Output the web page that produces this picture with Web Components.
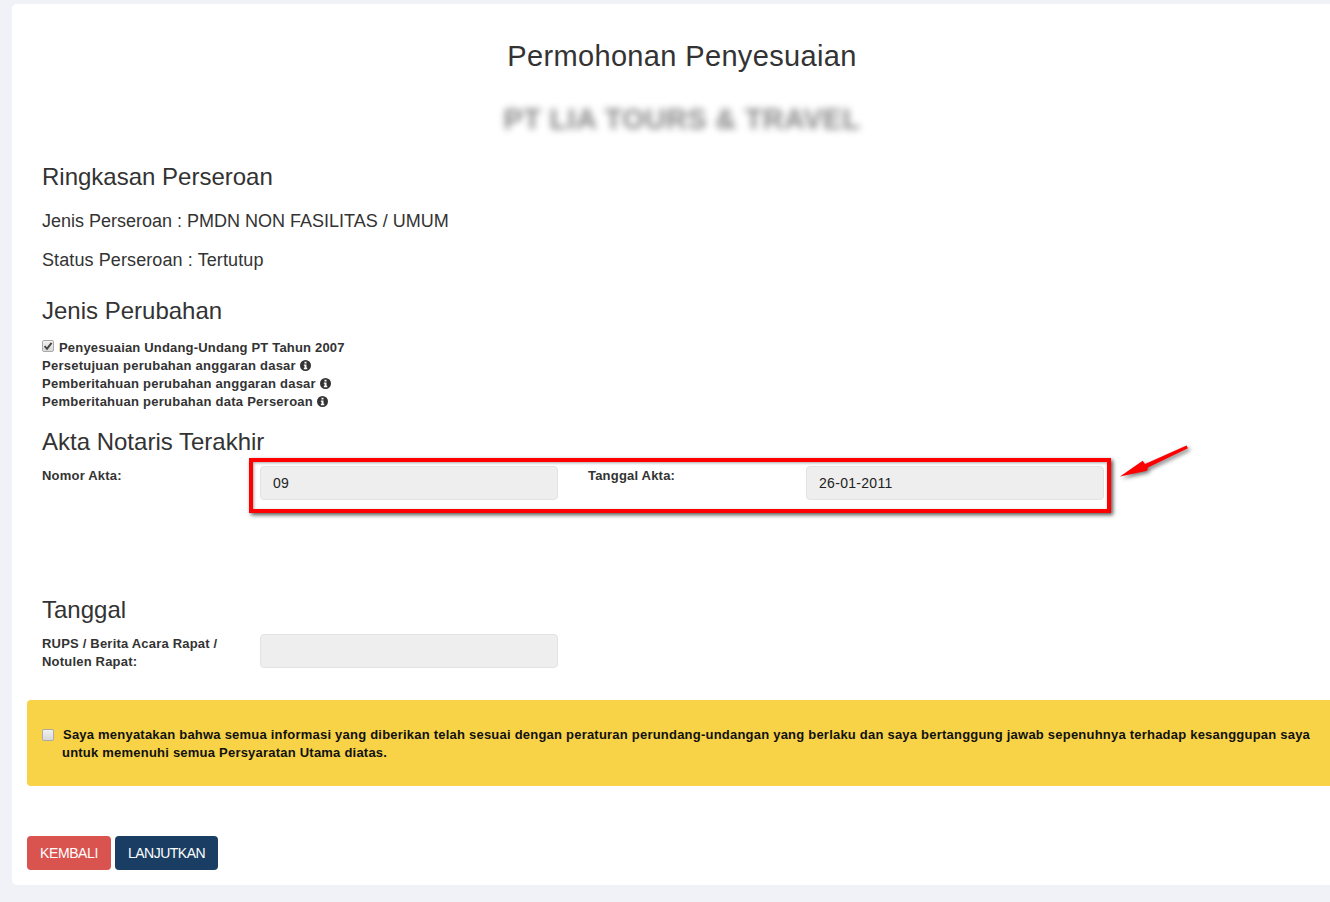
<!DOCTYPE html>
<html>
<head>
<meta charset="utf-8">
<title>Permohonan Penyesuaian</title>
<style>
  html, body { margin: 0; overflow: hidden; }
  body { background: #f0f2f7; color: #333; font-family: "Liberation Sans", Arial, sans-serif; height: 902px; }
</style>
</head>
<body>
<app-card>
  <page-title sub="PT LIA TOURS &amp; TRAVEL">Permohonan Penyesuaian</page-title>

  <section-head style="margin-top: 29px">Ringkasan Perseroan</section-head>
  <info-line style="margin-top: 21px">Jenis Perseroan : PMDN NON FASILITAS / UMUM</info-line>
  <info-line style="margin-top: 19px; letter-spacing: .1px">Status Perseroan : Tertutup</info-line>

  <section-head style="margin-top: 28px">Jenis Perubahan</section-head>
  <check-list style="margin-top: 15px">
    <check-item checked>Penyesuaian Undang-Undang PT Tahun 2007</check-item>
    <check-item info>Persetujuan perubahan anggaran dasar</check-item>
    <check-item info>Pemberitahuan perubahan anggaran dasar</check-item>
    <check-item info>Pemberitahuan perubahan data Perseroan</check-item>
  </check-list>

  <section-head style="margin-top: 18px">Akta Notaris Terakhir</section-head>
  <form-row style="margin-top: 11px">
    <form-field label="Nomor Akta:" value="09"></form-field>
    <form-field label="Tanggal Akta:" value="26-01-2011"></form-field>
  </form-row>

  <section-head style="margin-top: 97px">Tanggal</section-head>
  <form-row style="margin-top: 11px">
    <form-field label="RUPS / Berita Acara Rapat / Notulen Rapat:" value=""></form-field>
  </form-row>

  <notice-box style="margin-top: 29px">Saya menyatakan bahwa semua informasi yang diberikan telah sesuai dengan peraturan perundang-undangan yang berlaku dan saya bertanggung jawab sepenuhnya terhadap kesanggupan saya untuk memenuhi semua Persyaratan Utama diatas.</notice-box>

  <action-bar style="margin-top: 50px">
    <action-btn kind="danger">KEMBALI</action-btn>
    <action-btn kind="primary">LANJUTKAN</action-btn>
  </action-bar>

  <red-callout></red-callout>
</app-card>

<script>
class AppCard extends HTMLElement {
  constructor() {
    super();
    this.attachShadow({ mode: "open" }).innerHTML = `
      <style>
        :host { display: block; position: relative; box-sizing: border-box; width: 1340px; height: 881px; margin: 4px 0 0 12px; padding: 36px 15px 0; background: #fff; border-radius: 5px; }
      </style>
      <slot></slot>`;
  }
}

class PageTitle extends HTMLElement {
  constructor() {
    super();
    this.attachShadow({ mode: "open" }).innerHTML = `
      <style>
        :host { display: block; text-align: center; }
        h1 { margin: 0; font-size: 29px; line-height: 32px; font-weight: 400; letter-spacing: .35px; }
        .sub { margin-top: 31px; font-size: 29px; line-height: 32px; font-weight: 700; letter-spacing: .3px; color: #555; filter: blur(3.5px); opacity: .7; }
      </style>
      <h1><slot></slot></h1>
      <div class="sub"></div>`;
    this.shadowRoot.querySelector(".sub").textContent = this.getAttribute("sub");
  }
}

class SectionHead extends HTMLElement {
  constructor() {
    super();
    this.attachShadow({ mode: "open" }).innerHTML = `
      <style>
        :host { display: block; padding-left: 15px; font-size: 24px; line-height: 26px; }
      </style>
      <slot></slot>`;
  }
}

class InfoLine extends HTMLElement {
  constructor() {
    super();
    this.attachShadow({ mode: "open" }).innerHTML = `
      <style>
        :host { display: block; padding-left: 15px; font-size: 18px; line-height: 20px; }
      </style>
      <slot></slot>`;
  }
}

class CheckList extends HTMLElement {
  constructor() {
    super();
    this.attachShadow({ mode: "open" }).innerHTML = `
      <style>
        :host { display: block; padding-left: 15px; font-size: 13px; line-height: 18px; font-weight: 700; letter-spacing: .25px; }
      </style>
      <slot></slot>`;
  }
}

class CheckBox extends HTMLElement {
  constructor() {
    super();
    this.attachShadow({ mode: "open" }).innerHTML = `
      <style>
        :host { display: inline-block; box-sizing: border-box; width: 12px; height: 12px; border: 1px solid #a9a9a9; border-radius: 2px; background: linear-gradient(#f2f2f2, #d6d6d6); box-shadow: inset 0 0 1px #fff; }
        svg { display: block; width: 10px; height: 10px; }
      </style>
      ${this.hasAttribute("checked") ? '<svg viewBox="0 0 10 10"><path d="M1.6 5.2 4 7.8 8.6 1.8" fill="none" stroke="#444" stroke-width="1.9"/></svg>' : ""}`;
  }
}

const infoIcon = `<svg viewBox="0 0 12 12" width="11" height="11"><path fill="#333" fill-rule="evenodd" d="M6 0a6 6 0 1 0 0 12A6 6 0 0 0 6 0ZM4.9 2h2.2v1.7H4.9ZM4.2 4.8h2.9v3.7h.8V10H4.2V8.5h.8V6.3h-.8Z"/></svg>`;

class CheckItem extends HTMLElement {
  constructor() {
    super();
    const box = this.hasAttribute("checked") ? '<check-box checked class="box"></check-box>' : "";
    const info = this.hasAttribute("info") ? infoIcon : "";
    this.attachShadow({ mode: "open" }).innerHTML = `
      <style>
        :host { display: flex; align-items: center; height: 18px; }
        :host([checked]) { letter-spacing: .18px; }
        .box { margin-right: 5px; position: relative; top: -2px; }
        svg { margin: 0 0 2px 4px; }
      </style>
      ${box}<span><slot></slot></span>${info}`;
  }
}

class FormRow extends HTMLElement {
  constructor() {
    super();
    this.attachShadow({ mode: "open" }).innerHTML = `
      <style>
        :host { display: grid; grid-template-columns: repeat(2, 546px); }
      </style>
      <slot></slot>`;
  }
}

class FormField extends HTMLElement {
  constructor() {
    super();
    this.attachShadow({ mode: "open" }).innerHTML = `
      <style>
        :host { display: grid; grid-template-columns: 218px 328px; font-size: 13px; line-height: 18px; }
        label { padding: 1px 15px 0; font-weight: 700; letter-spacing: .2px; }
        .input { box-sizing: border-box; height: 34px; margin: 0 15px; padding: 0 12px; background: #eee; border: 1px solid #e3e3e3; border-radius: 4px; font-size: 14px; line-height: 32px; letter-spacing: .3px; color: #222; }
      </style>
      <label></label>
      <div class="input"></div>`;
    this.shadowRoot.querySelector("label").textContent = this.getAttribute("label");
    this.shadowRoot.querySelector(".input").textContent = this.getAttribute("value");
  }
}

class NoticeBox extends HTMLElement {
  constructor() {
    super();
    this.attachShadow({ mode: "open" }).innerHTML = `
      <style>
        :host { display: block; box-sizing: border-box; height: 86px; padding: 26px 17px 0 35px; background: #f8d347; border-radius: 4px; color: #111; font-size: 13px; line-height: 18px; font-weight: 700; letter-spacing: .22px; text-indent: 1px; position: relative; }
        check-box { position: absolute; left: 15px; top: 29px; }
      </style>
      <check-box></check-box><slot></slot>`;
  }
}

class ActionBar extends HTMLElement {
  constructor() {
    super();
    this.attachShadow({ mode: "open" }).innerHTML = `
      <style>
        :host { display: flex; gap: 4px; }
      </style>
      <slot></slot>`;
  }
}

class ActionBtn extends HTMLElement {
  constructor() {
    super();
    this.attachShadow({ mode: "open" }).innerHTML = `
      <style>
        :host { display: block; height: 34px; padding: 0 13px; border-radius: 4px; color: #fff; font-size: 14px; line-height: 34px; letter-spacing: -.4px; }
        :host([kind="danger"]) { background: #d9534f; }
        :host([kind="primary"]) { background: #1a3e63; letter-spacing: -.5px; }
      </style>
      <slot></slot>`;
  }
}

class RedCallout extends HTMLElement {
  constructor() {
    super();
    this.attachShadow({ mode: "open" }).innerHTML = `
      <style>
        :host { display: block; position: absolute; left: 237px; top: 454px; width: 920px; height: 60px; pointer-events: none; }
        .box { box-sizing: border-box; width: 862px; height: 55px; border: 4px solid #f00; box-shadow: 2px 2px 4px #555, inset 1px 1px 3px rgba(0,0,0,.35); }
        svg { position: absolute; left: 870px; top: -12px; filter: drop-shadow(2px 2px 2px rgba(0,0,0,.55)); overflow: visible; }
      </style>
      <div class="box"></div>
      <svg width="70" height="36" viewBox="0 0 70 36">
        <path fill="#f00" d="M1 30.5 L23.7 14.7 L26 18 L67.5 -0.5 L69 2.2 L29 21.5 L28 24.7 Z"/>
      </svg>`;
  }
}

customElements.define("app-card", AppCard);
customElements.define("page-title", PageTitle);
customElements.define("section-head", SectionHead);
customElements.define("info-line", InfoLine);
customElements.define("check-list", CheckList);
customElements.define("check-box", CheckBox);
customElements.define("check-item", CheckItem);
customElements.define("form-row", FormRow);
customElements.define("form-field", FormField);
customElements.define("notice-box", NoticeBox);
customElements.define("action-bar", ActionBar);
customElements.define("action-btn", ActionBtn);
customElements.define("red-callout", RedCallout);
</script>
</body>
</html>
